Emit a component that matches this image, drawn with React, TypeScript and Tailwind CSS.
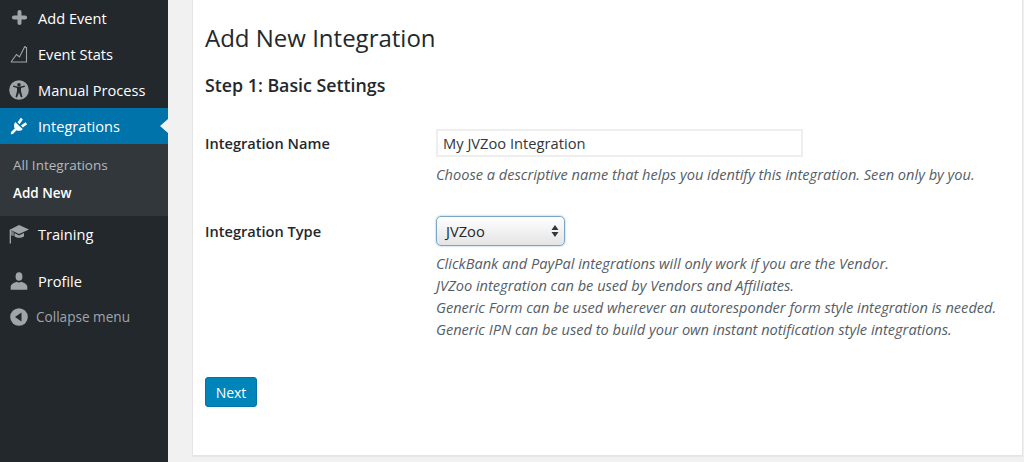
import React from 'react';
import { Plus } from 'lucide-react';

const font = "font-['Open_Sans',sans-serif]";

const MenuItem = ({ icon, label, active }: { icon: React.ReactNode; label: string; active?: boolean }) => (
  <div className={`relative h-9 flex items-center text-[14.6px] text-white ${active ? 'bg-[#0073aa]' : ''}`}>
    <div className="w-[38px] flex justify-center text-[#a0a5aa]">{icon}</div>
    <span className="pt-px">{label}</span>
    {active && (
      <div className="absolute right-0 top-[11px] border-y-[7px] border-r-[8px] border-y-transparent border-r-[#f1f1f1]" />
    )}
  </div>
);

const StatsIcon = () => (
  <svg width="18" height="18" viewBox="0 0 18 18" fill="none" stroke="#a0a5aa" strokeWidth="1.1">
    <path d="M1 17 6.500 9.500l3 2.500L14.500 2" />
    <path d="M1 17h15.500V2" />
    <circle cx="15" cy="2" r="1" fill="#a0a5aa" stroke="none" />
  </svg>
);

const ManualIcon = () => (
  <svg width="20" height="20" viewBox="0 0 20 20">
    <circle cx="10" cy="10" r="9.800" fill="#a0a5aa" />
    <circle cx="10" cy="4.800" r="1.800" fill="#23282d" />
    <path d="M4 6.800l4 1.100v3.400L6.500 17l1.500.4 2-5 2 5 1.500-.4-1.500-5.700V7.900l4-1.100-.3-1.200-3.900 1H8.200l-3.900-1z" fill="#23282d" />
  </svg>
);

const PlugIcon = () => (
  <svg width="18" height="18" viewBox="0 0 18 18" fill="white">
    <path d="M5.200 5 12.800 12.200C11 14 8.500 14.300 6.500 13.200L3.500 16.500 1.800 17.500.6 16.200 1.500 14.500 4.700 11.500C3.700 9.500 3.800 7 5.200 5z" />
    <path d="M7.500 5.300 10.800.800 12.900 2.500 9.600 7.200zM10.900 8.500 15.400 5.200 17.200 7.300 12.800 10.500z" />
  </svg>
);

const TrainingIcon = () => (
  <svg width="20" height="19" viewBox="0 0 20 19" fill="#a0a5aa">
    <path d="M10 0 20 4.500 10 9 3.200 5.700 2.200 5.500 1.200 4.600z" />
    <path d="M5.500 8 10 10.400 15 8v3.300c-2.800 2-6.700 2-9.500 0z" />
    <path d="M.700 4.600h1.300v14H.700z" />
    <path d="M2 5.600 4.800 7v4.300L2 10.300z" opacity=".7" />
  </svg>
);

const ProfileIcon = () => (
  <svg width="18" height="18" viewBox="0 0 18 18" fill="#a0a5aa">
    <ellipse cx="9" cy="4.500" rx="3.400" ry="4.300" />
    <path d="M.700 17.800v-3.300C.700 12 4.500 10.700 6.500 9.700c1.500 1 3.500 1 5 0 2 1 5.800 2.300 5.800 4.800v3.300z" />
  </svg>
);

const CollapseIcon = () => (
  <svg width="18" height="18" viewBox="0 0 18 18">
    <circle cx="9" cy="9" r="8.800" fill="#a0a5aa" />
    <path d="M11.500 4.500v9L5 9z" fill="#23282d" />
  </svg>
);

const Sidebar = () => (
  <aside className="w-[168px] shrink-0 h-[462px] bg-[#23282d]">
    <MenuItem icon={<Plus size={19} strokeWidth={4} absoluteStrokeWidth className="-mt-[1px]" />} label="Add Event" />
    <MenuItem icon={<StatsIcon />} label="Event Stats" />
    <MenuItem icon={<ManualIcon />} label="Manual Process" />
    <MenuItem icon={<PlugIcon />} label="Integrations" active />
    <div className="h-[72px] bg-[#32373c] pt-[7px] text-[13.5px]">
      <div className="h-7 flex items-center pl-[13px] pt-px text-[#b4b9be]">All Integrations</div>
      <div className="h-7 flex items-center pl-[13px] pt-px font-semibold text-white">Add New</div>
    </div>
    <MenuItem icon={<TrainingIcon />} label="Training" />
    <div className="h-[11px]" />
    <MenuItem icon={<ProfileIcon />} label="Profile" />
    <div className="h-9 flex items-center text-[13.6px] text-[#a0a5aa]">
      <div className="w-[38px] flex justify-center -mr-[2px]"><CollapseIcon /></div>
      <span className="pt-px">Collapse menu</span>
    </div>
  </aside>
);

const Hint = ({ children }: { children: React.ReactNode }) => (
  <p className="text-[14.6px] leading-[22px] italic text-[#555d66] whitespace-nowrap">{children}</p>
);

const FormPanel = () => (
  <section className="ml-6 mr-px h-[457px] -mt-px bg-white border border-[#e5e5e5] shadow-[0_1px_1px_rgba(0,0,0,0.04)] pl-3 pt-[22px]">
    <h1 className="text-[24px] leading-8 text-[#23282d]">Add New Integration</h1>
    <h2 className="mt-[19px] text-[17.8px] leading-6 font-semibold text-[#23282d]">Step 1: Basic Settings</h2>

    <div className="mt-[32px] grid grid-cols-[231px_1fr]">
      <label className="pt-[4px] text-[14.6px] leading-5 font-semibold text-[#23282d]">Integration Name</label>
      <div>
        <div className="w-[367px] h-[28px] border-2 border-[#eeeeee] bg-white flex items-center pl-[5px] text-[14.7px] text-[#32373c]">
          My JVZoo Integration
        </div>
        <div className="mt-[6px]">
          <Hint>Choose a descriptive name that helps you identify this integration. Seen only by you.</Hint>
        </div>
      </div>
    </div>

    <div className="mt-[31px] grid grid-cols-[231px_1fr]">
      <label className="pt-[5px] text-[14.6px] leading-5 font-semibold text-[#23282d]">Integration Type</label>
      <div>
        <div className="w-[129px] h-[30px] rounded-[5px] border border-[#7ba7c4] shadow-[0_0_2px_#7fb0d0] bg-gradient-to-b from-white to-[#e4e4e4] flex items-center justify-between pl-[9px] pr-[5px] text-[14.7px] text-[#23282d]">
          <span>JVZoo</span>
          <svg width="8" height="14" viewBox="0 0 8 14" fill="#32373c">
            <path d="M4 1l3.500 5h-7zM4 13l3.500-5h-7z" />
          </svg>
        </div>
        <div className="mt-[6px]">
          <Hint>ClickBank and PayPal integrations will only work if you are the Vendor.</Hint>
          <Hint>JVZoo integration can be used by Vendors and Affiliates.</Hint>
          <Hint>Generic Form can be used wherever an autoresponder form style integration is needed.</Hint>
          <Hint>Generic IPN can be used to build your own instant notification style integrations.</Hint>
        </div>
      </div>
    </div>

    <button className="mt-[37px] w-[52px] h-[30px] rounded-[3px] bg-[#0085ba] border border-[#0073aa] text-[14px] text-white">
      Next
    </button>
  </section>
);

export default function App() {
  return (
    <div className={`${font} flex w-[1024px] h-[462px] overflow-hidden bg-[#f1f1f1]`}>
      <Sidebar />
      <main className="flex-1 min-w-0">
        <FormPanel />
      </main>
    </div>
  );
}
